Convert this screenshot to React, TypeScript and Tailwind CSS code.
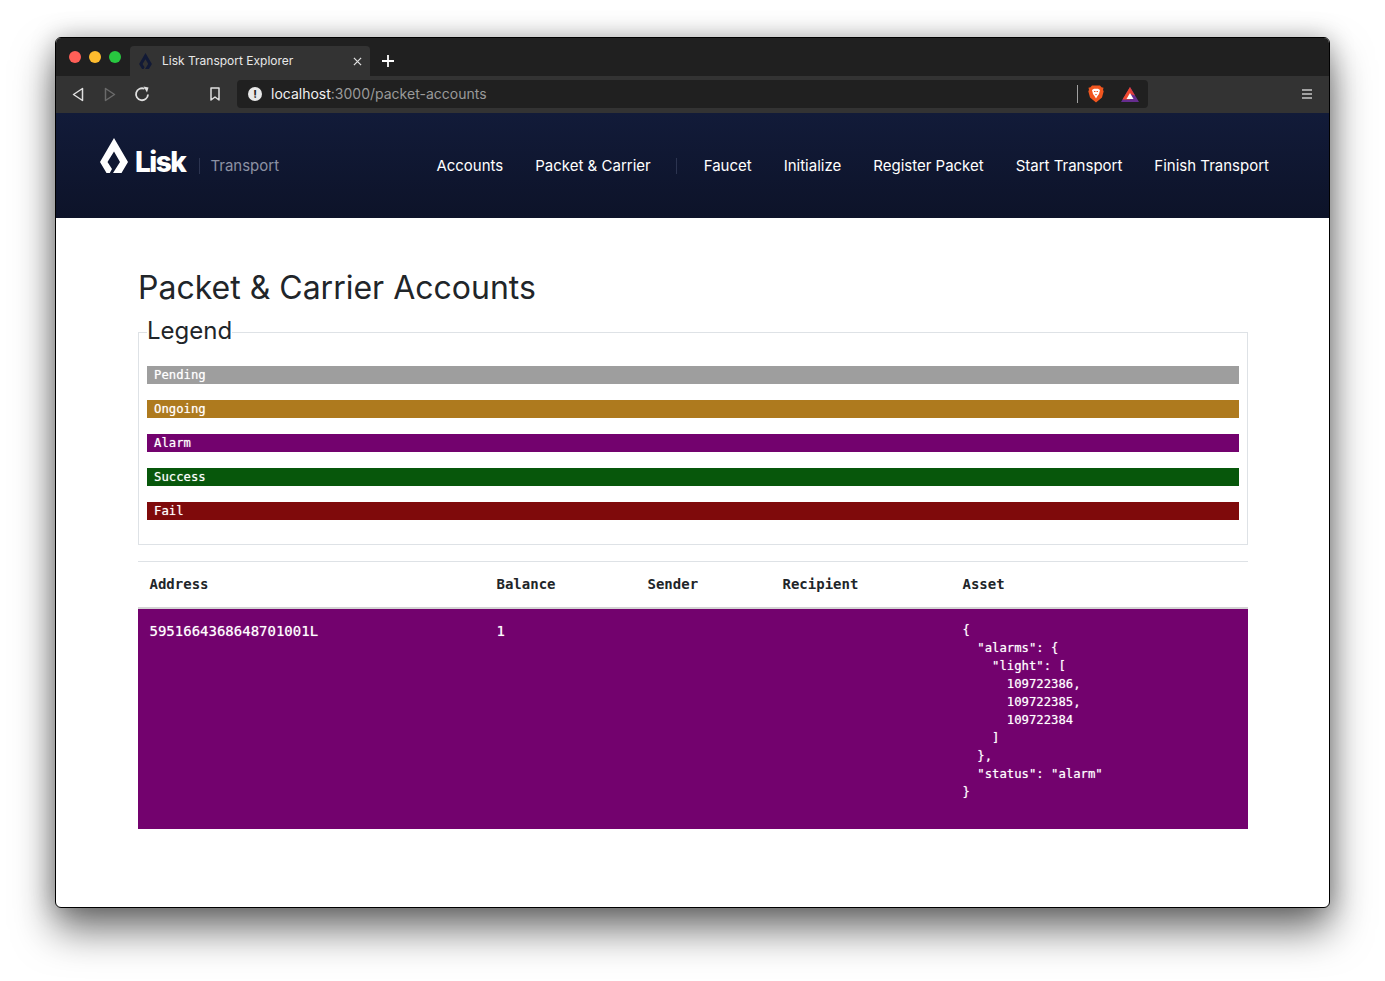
const navLinks = ["Accounts", "Packet & Carrier"];
const navActions = ["Faucet", "Initialize", "Register Packet", "Start Transport", "Finish Transport"];

const legend = [
  { label: "Pending", className: "bg-[#9e9e9e]" },
  { label: "Ongoing", className: "bg-[#ae7a1e]" },
  { label: "Alarm", className: "bg-[#73026e]" },
  { label: "Success", className: "bg-[#07570b]" },
  { label: "Fail", className: "bg-[#7f0a0b]" },
];

const asset = JSON.stringify(
  { alarms: { light: [109722386, 109722385, 109722384] }, status: "alarm" },
  null,
  2,
);

function LiskDrop({ className }: { className?: string }) {
  return (
    <svg viewBox="0 0 28 35" className={className} fill="currentColor">
      <path d="M14 0 L28 24 L21.5 35 L13 35 L20 24 L14 13.5 L7.5 24 L12 31 L9.8 35 L6.5 35 L0 24 Z" />
    </svg>
  );
}

function TitleBar() {
  return (
    <div className="flex h-[38px] shrink-0 items-end bg-[#202020] pl-[13px]">
      <div className="mb-[13px] flex gap-2">
        <span className="size-3 rounded-full bg-[#ff5f57]" />
        <span className="size-3 rounded-full bg-[#febc2e]" />
        <span className="size-3 rounded-full bg-[#28c840]" />
      </div>
      <div className="ml-[9px] flex h-[30px] w-[240px] items-center rounded-t-[4px] bg-[#333333] pl-[9px] pr-[8px] font-['Inter',sans-serif]">
        <LiskDrop className="h-4 w-[13px] text-[#121a36]" />
        <span className="ml-[10px] flex-1 text-[12px] text-[#e8e8e8]">Lisk Transport Explorer</span>
        <svg viewBox="0 0 10 10" className="size-[9px] text-[#dddddd]" stroke="currentColor" strokeWidth="1.4">
          <path d="M1 1 L9 9 M9 1 L1 9" />
        </svg>
      </div>
      <svg viewBox="0 0 12 12" className="mb-[9px] ml-3 size-3 text-white" stroke="currentColor" strokeWidth="1.8">
        <path d="M6 0 V12 M0 6 H12" />
      </svg>
    </div>
  );
}

function Toolbar() {
  return (
    <div className="flex h-[37px] shrink-0 items-center bg-[#333333] pb-[1px] pl-[16px] pr-[17px] font-['Inter',sans-serif]">
      <svg viewBox="0 0 12 15" className="h-[15px] w-3 text-[#e0e0e0]" fill="none" stroke="currentColor" strokeWidth="1.5">
        <path d="M10.5 1.5 V13.5 L1.5 7.5 Z" strokeLinejoin="round" />
      </svg>
      <svg viewBox="0 0 12 15" className="ml-[20px] h-[15px] w-3 text-[#6a6a6a]" fill="none" stroke="currentColor" strokeWidth="1.5">
        <path d="M1.5 1.5 V13.5 L10.5 7.5 Z" strokeLinejoin="round" />
      </svg>
      <svg viewBox="0 0 16 16" className="ml-[18px] size-4 text-[#e0e0e0]" fill="none" stroke="currentColor" strokeWidth="1.8">
        <path d="M14 8.5 A6 6 0 1 1 10.5 2.8" />
        <path d="M9.5 0.5 L14.5 1.5 L13 6.5 Z" fill="currentColor" stroke="none" />
      </svg>
      <svg viewBox="0 0 10 14" className="ml-[60px] h-[14px] w-[10px] text-[#e0e0e0]" fill="none" stroke="currentColor" strokeWidth="1.5">
        <path d="M1 1 H9 V13 L5 10 L1 13 Z" strokeLinejoin="round" />
      </svg>
      <div className="ml-[17px] flex h-7 w-[911px] items-center rounded-[4px] bg-[#202020] pl-[11px]">
        <span className="flex size-[14px] items-center justify-center rounded-full bg-[#e8e8e8] text-[11px] font-bold leading-none text-[#202020]">!</span>
        <span className="mb-[2px] ml-[9px] text-[14px] text-[#f0f0f0]">
          localhost<span className="text-[#9a9a9a]">:3000/packet-accounts</span>
        </span>
        <span className="ml-auto h-[18px] w-px bg-[#a0a0a0]" />
        <svg viewBox="0 0 16 18" className="ml-[10px] h-[18px] w-4">
          <path d="M4 0.5 H12 L13.5 2.3 L15.5 2.8 L15 5 L15.7 6.3 L14 12.5 L8 17.5 L2 12.5 L0.3 6.3 L1 5 L0.5 2.8 L2.5 2.3 Z" fill="#f1561f" />
          <path d="M4 5 L6 3.8 H10 L12 5 L11 9 L9.5 11 L8 13.5 L6.5 11 L5 9 Z" fill="#ffffff" />
          <path d="M6 6 H7.5 V7 H6 Z M8.5 6 H10 V7 H8.5 Z M7 9 H9 L8 10.5 Z" fill="#f1561f" />
        </svg>
        <svg viewBox="0 0 18 15" className="ml-[17px] mr-[9px] h-[15px] w-[18px]">
          <path d="M9 0 L18 15 H0 Z" fill="#662d8f" />
          <path d="M9 0 L1.5 12.5 H9 Z" fill="#f0492e" />
          <path d="M9 0 L14 8.5 L9 7 Z" fill="#e0403a" />
          <path d="M9 6 L12.5 12 H5.5 Z" fill="#ffffff" />
        </svg>
      </div>
      <svg viewBox="0 0 10 10" className="ml-auto size-[10px] text-[#c8c8c8]" stroke="currentColor" strokeWidth="1.4">
        <path d="M0 1 H10 M0 5 H10 M0 9 H10" />
      </svg>
    </div>
  );
}

function Navbar() {
  return (
    <nav className="flex h-[105px] shrink-0 items-center bg-gradient-to-b from-[#121b39] to-[#0d1329] pl-[44px] pr-[60px] pt-[1px] font-['Inter',sans-serif] text-[15px] text-white">
      <div className="flex items-center">
        <div className="mb-[21px] flex items-end">
          <LiskDrop className="h-[35px] w-7 text-white" />
          <span className="-mb-[3px] ml-[7px] text-[28px] font-extrabold leading-none tracking-[-1.5px]">Lisk</span>
        </div>
        <span className="ml-[14px] h-4 w-px bg-[#2c3450]" />
        <span className="ml-[10px] text-[#8c91a3]">Transport</span>
      </div>
      <div className="ml-auto flex items-center gap-8">
        {navLinks.map((link) => (
          <a key={link}>{link}</a>
        ))}
        <span className="-ml-[7px] -mr-[5px] h-4 w-px bg-[#2c3450]" />
        {navActions.map((link) => (
          <a key={link}>{link}</a>
        ))}
      </div>
    </nav>
  );
}

function AccountsTable() {
  return (
    <table className="mt-4 w-full table-fixed border-collapse font-['DejaVu_Sans_Mono',monospace] text-[14px] text-white">
      <colgroup>
        <col className="w-[347px]" />
        <col className="w-[151px]" />
        <col className="w-[135px]" />
        <col className="w-[180px]" />
        <col />
      </colgroup>
      <thead className="text-left font-bold text-[#212529]">
        <tr className="h-[46px] border-t border-b-2 border-t-[#dee2e6] border-b-[#d4d4d4]">
          <th className="pl-[11.5px]">Address</th>
          <th className="pl-[11.5px]">Balance</th>
          <th className="pl-[11.5px]">Sender</th>
          <th className="pl-[11.5px]">Recipient</th>
          <th className="pl-[11.5px]">Asset</th>
        </tr>
      </thead>
      <tbody className="[text-shadow:0_0_1px_rgba(255,255,255,0.6)]">
        <tr className="bg-[#73026e] align-top">
          <td className="pl-[11.5px] pt-[12px]">5951664368648701001L</td>
          <td className="pl-[11.5px] pt-[12px]">1</td>
          <td />
          <td />
          <td className="pb-[28px] pl-[11.5px] pt-[12px]">
            <pre className="font-['DejaVu_Sans_Mono',monospace] text-[12.25px] leading-[18px]">{asset}</pre>
          </td>
        </tr>
      </tbody>
    </table>
  );
}

export default function App() {
  return (
    <div className="h-[981px] w-[1385px] overflow-hidden bg-white pl-[55px] pt-[37px]">
      <div className="flex h-[871px] w-[1275px] flex-col overflow-hidden rounded-[6px] border border-black bg-white shadow-[0_22px_40px_rgba(0,0,0,0.55),0_0_24px_rgba(0,0,0,0.25)]">
        <TitleBar />
        <Toolbar />
        <Navbar />
        <main className="pl-[82px] pr-[81px] pt-[49px] font-['Inter',sans-serif] text-[#212529]">
          <h1 className="text-[32px] font-normal leading-[42px]">Packet &amp; Carrier Accounts</h1>
          <fieldset className="mt-[7px] h-[229px] border border-[#dee2e6] px-2">
            <legend className="pb-[4px] text-[24px] leading-[29px]">Legend</legend>
            <div className="mt-[17px] flex flex-col gap-4 font-['DejaVu_Sans_Mono',monospace] text-[12.25px] leading-[18px] text-white [text-shadow:0_0_1px_rgba(255,255,255,0.6)]">
              {legend.map((item) => (
                <div key={item.label} className={`h-[18px] pl-[7px] ${item.className}`}>
                  {item.label}
                </div>
              ))}
            </div>
          </fieldset>
          <AccountsTable />
        </main>
      </div>
    </div>
  );
}
